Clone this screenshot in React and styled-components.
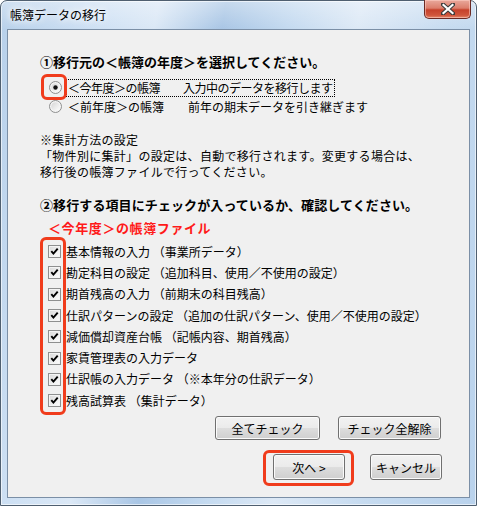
import styled, { createGlobalStyle } from "styled-components";

const GlobalStyle = createGlobalStyle`
  html, body {
    margin: 0;
    padding: 0;
    background: #ffffff;
  }
  body {
    font-family: "Noto Sans CJK JP", "Noto Sans", sans-serif;
    color: #000;
  }
`;

const ITEMS = [
  "基本情報の入力 （事業所データ）",
  "勘定科目の設定 （追加科目、使用／不使用の設定）",
  "期首残高の入力 （前期末の科目残高）",
  "仕訳パターンの設定 （追加の仕訳パターン、使用／不使用の設定）",
  "減価償却資産台帳 （記帳内容、期首残高）",
  "家賃管理表の入力データ",
  "仕訳帳の入力データ （※本年分の仕訳データ）",
  "残高試算表 （集計データ）",
];

const CloseGlyph = () => (
  <svg width="14" height="12" viewBox="0 0 14 12">
    <path
      d="M2 1.5 L12 10.5 M12 1.5 L2 10.5"
      stroke="#3b3b3b"
      strokeWidth="4.2"
      strokeLinecap="square"
    />
    <path
      d="M2.5 2 L11.5 10 M11.5 2 L2.5 10"
      stroke="#ffffff"
      strokeWidth="2.2"
      strokeLinecap="square"
    />
  </svg>
);

const CheckBox = () => (
  <svg width="13" height="13" viewBox="0 0 13 13">
    <defs>
      <linearGradient id="cbFill" x1="0" y1="0" x2="1" y2="1">
        <stop offset="0" stopColor="#dcdcdc" />
        <stop offset="1" stopColor="#fbfbfb" />
      </linearGradient>
    </defs>
    <rect x="0.5" y="0.5" width="12" height="12" fill="#f4f4f4" stroke="#8e8f8f" />
    <rect x="2" y="2" width="9" height="9" fill="url(#cbFill)" />
    <path d="M3.3 6.2 L5.4 8.6 L9.7 3.6" fill="none" stroke="#000" strokeWidth="1.9" />
  </svg>
);

const Radio = ({ checked }) => (
  <svg width="13" height="13" viewBox="0 0 13 13">
    <defs>
      <linearGradient id="rdFill" x1="0" y1="0" x2="1" y2="1">
        <stop offset="0" stopColor="#d6d6d6" />
        <stop offset="1" stopColor="#fdfdfd" />
      </linearGradient>
    </defs>
    <circle cx="6.5" cy="6.5" r="6" fill="#f4f4f4" stroke="#8e8f8f" />
    <circle cx="6.5" cy="6.5" r="4.3" fill="url(#rdFill)" />
    {checked && <circle cx="6.5" cy="6.5" r="2.2" fill="#111" />}
  </svg>
);

const App = () => {
  return (
    <>
      <GlobalStyle />
      <Window>
        <TitleBar>
          <Title>帳簿データの移行</Title>
          <CloseButton aria-label="閉じる">
            <CloseGlyph />
          </CloseButton>
        </TitleBar>

        <Client>
          <Heading>①移行元の＜帳簿の年度＞を選択してください。</Heading>

          <RadioList>
            <RadioRow>
              <RadioMark />
              <Radio checked />
              <RadioLabel $focused $spacing={-0.5}>
                ＜今年度＞の帳簿　　入力中のデータを移行します
              </RadioLabel>
            </RadioRow>
            <RadioRow>
              <Radio />
              <RadioLabel>＜前年度＞の帳簿　　前年の期末データを引き継ぎます</RadioLabel>
            </RadioRow>
          </RadioList>

          <Note>
            ※集計方法の設定
            <br />
            「物件別に集計」の設定は、自動で移行されます。変更する場合は、
            <br />
            移行後の帳簿ファイルで行ってください。
          </Note>

          <Heading $gap={17} $spacing={0.1}>
            ②移行する項目にチェックが入っているか、確認してください。
          </Heading>
          <SubHeading>＜今年度＞の帳簿ファイル</SubHeading>

          <CheckList>
            <CheckMark />
            {ITEMS.map((item) => (
              <CheckRow key={item}>
                <CheckBox />
                <CheckLabel>{item}</CheckLabel>
              </CheckRow>
            ))}
          </CheckList>

          <ButtonRow $top={5} $right={28} $gap={18}>
            <Button $width={105} $height={24}>全てチェック</Button>
            <Button $width={103} $height={24}>チェック全解除</Button>
          </ButtonRow>

          <ButtonRow $top={14} $right={27} $gap={25}>
            <MarkedButton>
              <ButtonMark />
              <Button $width={72} $height={26}>次へ &gt;</Button>
            </MarkedButton>
            <Button $width={72} $height={26}>キャンセル</Button>
          </ButtonRow>
        </Client>
      </Window>
    </>
  );
};

const Window = styled.div`
  width: 477px;
  height: 506px;
  box-sizing: border-box;
  display: flex;
  flex-direction: column;
  border-radius: 7px 7px 0 0;
  border: 1px solid #4f5f70;
  background:
    linear-gradient(180deg, rgba(255, 255, 255, 0.35) 0px, rgba(255, 255, 255, 0) 28px),
    linear-gradient(
      100deg,
      #b7d0ea 0%,
      #cfe1f4 18%,
      #dbe8f6 28%,
      #a9c6e5 40%,
      #c4daf0 52%,
      #dde9f6 64%,
      #c6dbf0 80%,
      #b9d2ec 100%
    );
  box-shadow: inset 0 0 0 1px rgba(255, 255, 255, 0.6);
`;

const TitleBar = styled.div`
  height: 28px;
  display: flex;
  align-items: flex-start;
  justify-content: space-between;
`;

const Title = styled.div`
  padding: 5px 0 0 9px;
  font-size: 12px;
  line-height: 18px;
  color: #000;
  text-shadow: 0 0 6px #ffffff, 0 0 10px #ffffff;
`;

const CloseButton = styled.button`
  width: 47px;
  height: 19px;
  margin: -1px 5px 0 0;
  padding: 0;
  display: flex;
  align-items: center;
  justify-content: center;
  border: 1px solid #6b2a24;
  border-top: none;
  border-radius: 0 0 5px 5px;
  background: linear-gradient(
    180deg,
    #e9a99c 0%,
    #dc7e6c 45%,
    #c6412b 55%,
    #d0563c 85%,
    #e58a6d 100%
  );
  box-shadow: inset 0 0 0 1px rgba(255, 210, 200, 0.55);
`;

const Client = styled.div`
  flex: 1;
  margin: 0 6px 7px 6px;
  padding: 0 0 0 32px;
  border: 1px solid #7b8fa6;
  background: #f0f0f0;
  display: flex;
  flex-direction: column;
  font-size: 12px;
  line-height: 16px;
`;

const Heading = styled.div`
  margin-top: ${(p) => p.$gap ?? 24}px;
  font-size: 13px;
  line-height: 16px;
  font-weight: bold;
  letter-spacing: ${(p) => p.$spacing ?? 0}px;
  white-space: nowrap;
`;

const RadioList = styled.div`
  margin-top: 8px;
  display: flex;
  flex-direction: column;
`;

const RadioRow = styled.div`
  position: relative;
  height: 19px;
  padding-left: 9px;
  display: flex;
  align-items: center;
  gap: 4px;
`;

const RadioLabel = styled.span`
  padding: 0 1px;
  line-height: 16px;
  letter-spacing: ${(p) => p.$spacing ?? 0}px;
  border: 1px dotted ${(p) => (p.$focused ? "#000" : "transparent")};
  white-space: nowrap;
`;

const Note = styled.div`
  margin-top: 16px;
  letter-spacing: 0.3px;
  white-space: nowrap;
`;

const SubHeading = styled.div`
  margin: 7px 0 0 8px;
  font-size: 13px;
  line-height: 16px;
  font-weight: bold;
  color: #ff1a1a;
  letter-spacing: 0.6px;
`;

const CheckList = styled.div`
  position: relative;
  margin-top: 5px;
  display: flex;
  flex-direction: column;
`;

const CheckRow = styled.div`
  height: 21.3px;
  padding-left: 8px;
  display: flex;
  align-items: center;
  gap: 5px;

  svg {
    flex-shrink: 0;
  }
`;

const CheckLabel = styled.span`
  white-space: nowrap;
`;

/* red annotation frames laid over the dialog */
const Mark = styled.span`
  position: absolute;
  box-sizing: border-box;
  border: 3px solid #f03c1c;
  border-radius: 6px;
  pointer-events: none;
`;

const RadioMark = styled(Mark)`
  top: -4px;
  left: 1px;
  width: 26px;
  height: 26px;
`;

const CheckMark = styled(Mark)`
  top: -4px;
  bottom: -4px;
  left: 0;
  width: 26px;
`;

const ButtonMark = styled(Mark)`
  inset: -4px -9px -6px -10px;
`;

const ButtonRow = styled.div`
  margin-top: ${(p) => p.$top}px;
  padding-right: ${(p) => p.$right}px;
  display: flex;
  justify-content: flex-end;
  gap: ${(p) => p.$gap}px;
`;

const MarkedButton = styled.div`
  position: relative;
  display: flex;
`;

const Button = styled.button`
  width: ${(p) => p.$width}px;
  height: ${(p) => p.$height}px;
  padding: 0;
  box-sizing: border-box;
  border: 1px solid #707070;
  border-radius: 3px;
  background: linear-gradient(180deg, #f2f2f2 0%, #ebebeb 48%, #dddddd 52%, #cfcfcf 100%);
  box-shadow: inset 0 0 0 1px #fbfbfb;
  font-family: "Noto Sans CJK JP", "Noto Sans", sans-serif;
  font-size: 12px;
  color: #000;
`;

export default App;
